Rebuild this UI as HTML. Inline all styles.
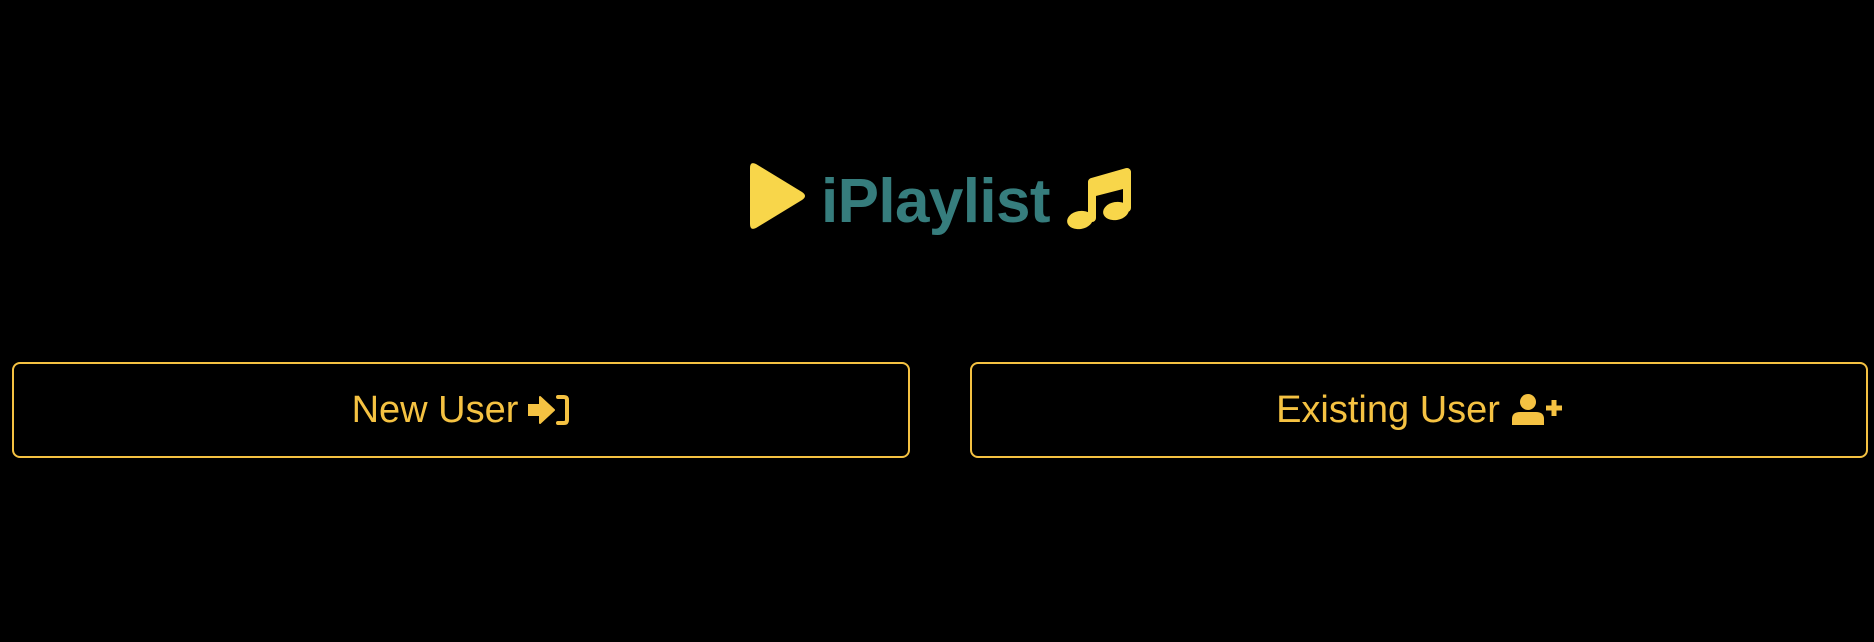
<!DOCTYPE html>
<html><head><style>
html,body{margin:0;padding:0;background:#000;width:1874px;height:642px;overflow:hidden;font-family:"Liberation Sans",sans-serif}
.logo{position:absolute;left:0;top:0}
.title{position:absolute;left:821px;top:165px;font-size:62px;font-weight:bold;color:#367d7d;line-height:74px;letter-spacing:-0.6px}
.btn{position:absolute;top:362px;height:96px;width:898px;border:2px solid #f5c242;border-radius:8px;box-sizing:border-box;color:#f5c242;font-size:38px;display:flex;align-items:center;justify-content:center}
.btn svg{margin-left:10px}
</style></head><body>
<svg class="logo" width="1874" height="300" style="position:absolute;left:0;top:0">
<path d="M756 164 L802 192 Q808 196 802 200 L756 228 Q750 231 750 224 L750 168 Q750 161 756 164Z" fill="#f8d64a"/>
<path d="M1092 182 L1092 218 M1092 182 L1127 172 L1127 208" stroke="#f8d64a" stroke-width="8" fill="none" stroke-linejoin="round" stroke-linecap="round"/>
<path d="M1092 184 L1127 174 L1127 188 L1092 197Z" fill="#f8d64a"/>
<ellipse cx="1080" cy="220" rx="13" ry="9" fill="#f8d64a" transform="rotate(-10 1080 220)"/>
<ellipse cx="1116" cy="211" rx="13" ry="9" fill="#f8d64a" transform="rotate(-10 1116 211)"/>
</svg>
<div class="title">iPlaylist</div>
<div class="btn" style="left:12px">New User
<svg width="42" height="32" viewBox="0 0 42 32"><path d="M0 11 H12 V3 L26 16 L12 29 V21 H0Z" fill="#f5c242" stroke="#f5c242" stroke-width="2" stroke-linejoin="round"/><path d="M30 3 H36 Q39 3 39 6 V26 Q39 29 36 29 H30" stroke="#f5c242" stroke-width="4" fill="none" stroke-linecap="round"/></svg></div>
<div class="btn" style="left:970px">Existing User
<svg width="52" height="34" viewBox="0 0 52 34"><circle cx="18" cy="9" r="8" fill="#f5c242"/><path d="M2 32 V26 Q2 19 10 19 H26 Q34 19 34 26 V32Z" fill="#f5c242"/><path d="M44 7 V23 M36 15 H52" stroke="#f5c242" stroke-width="5"/></svg></div>
</body></html>
